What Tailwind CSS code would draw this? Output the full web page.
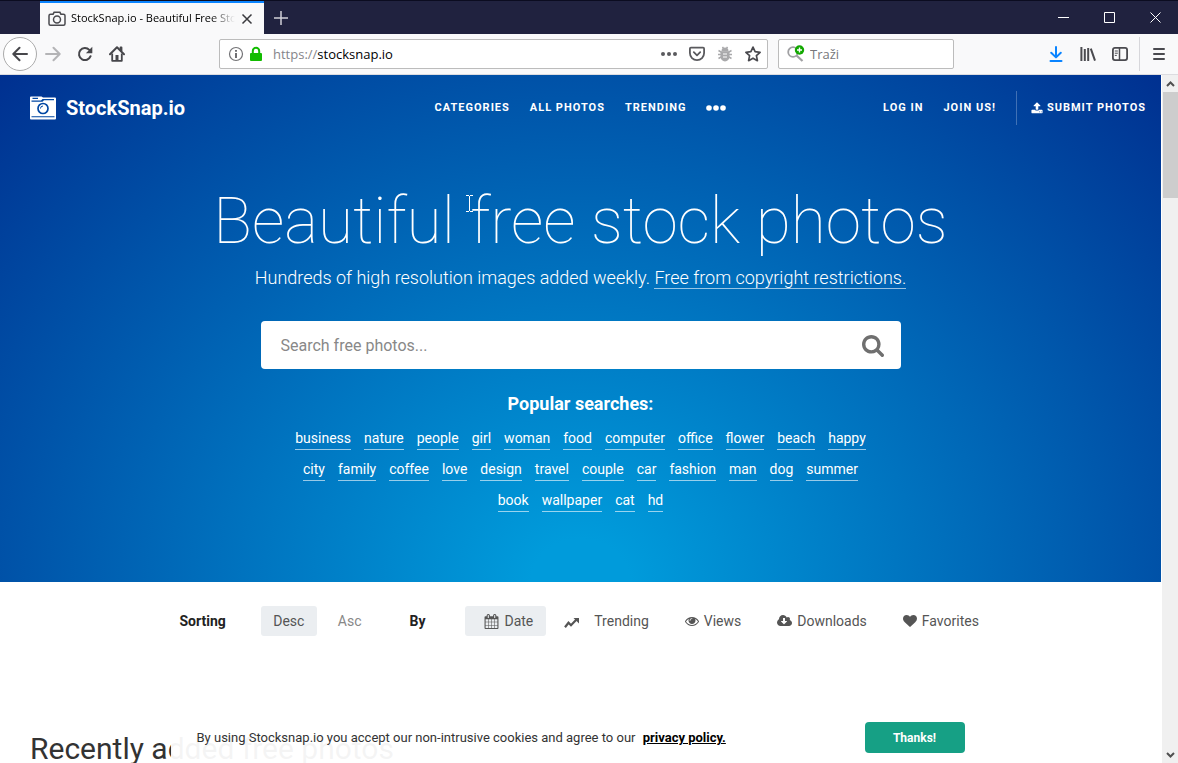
<!DOCTYPE html>
<html lang="en">
<head>
    <meta charset="UTF-8">
    <meta name="viewport" content="width=device-width, initial-scale=1.0">
    <title>StockSnap.io - Beautiful Free Stock Photos</title>
    <script src="https://cdn.jsdelivr.net/npm/@tailwindcss/browser@4"></script>
</head>
<body class="h-screen flex flex-col overflow-hidden bg-white font-['Roboto',sans-serif]">

    <!-- Tab strip -->
    <div class="h-[34px] shrink-0 flex items-stretch bg-[#20223f] border-t border-[#0b0c20] font-['Open_Sans',sans-serif]">
        <div class="ml-10 w-56 flex items-center bg-[#f9f9fa] border-t-2 border-[#0a84ff] pl-2 pr-[11px]">
            <svg class="w-[18px] h-4 shrink-0" viewBox="0 0 18 16" fill="none" stroke="#4a4a4f" stroke-width="1.5"><path d="M2.5 3.2h2.6l1-1.9h5.8l1 1.9h2.6q1.5 0 1.5 1.5v8q0 1.5-1.5 1.5h-13Q1 14.200 1 12.700v-8q0-1.500 1.500-1.500z"/><circle cx="9" cy="8.500" r="3.500"/></svg>
            <div class="ml-[5px] flex-1 overflow-hidden whitespace-nowrap text-[11px] text-black mask-r-from-85%">StockSnap.io - Beautiful Free Stock</div>
            <button class="ml-1.5 shrink-0" aria-label="Close tab">
                <svg class="w-3 h-3" viewBox="0 0 12 12" stroke="#3a3a3e" stroke-width="1.500"><path d="M1.500 1.500l9 9M10.500 1.500l-9 9"/></svg>
            </button>
        </div>
        <button class="ml-[9px]" aria-label="New tab">
            <svg class="w-4 h-4" viewBox="0 0 16 16" stroke="#d0d0d8" stroke-width="1.500"><path d="M8 1v14M1 8h14"/></svg>
        </button>
        <div class="ml-auto flex">
            <button class="w-[46px] flex items-center justify-center" aria-label="Minimize"><svg class="w-[11px] h-[11px]" viewBox="0 0 11 11" stroke="#fff"><path d="M0 5.500h11"/></svg></button>
            <button class="w-[46px] flex items-center justify-center" aria-label="Maximize"><svg class="w-[11px] h-[11px]" viewBox="0 0 11 11" stroke="#fff" fill="none"><path d="M.5.5h10v10H.5z"/></svg></button>
            <button class="w-[46px] flex items-center justify-center" aria-label="Close"><svg class="w-[11px] h-[11px]" viewBox="0 0 11 11" stroke="#fff"><path d="M.5.5l10 10M10.500.5l-10 10"/></svg></button>
        </div>
    </div>

    <!-- Toolbar -->
    <div class="h-[41px] shrink-0 flex items-center bg-[#f9f9fa] border-b border-[#dcdce0] font-['Open_Sans',sans-serif] text-[#4a4a4f]">
        <div class="flex items-center pl-[3px]">
            <button class="w-[34px] h-[34px] rounded-full border border-[#ababab] bg-white flex items-center justify-center" aria-label="Back">
                <svg class="w-4 h-4" viewBox="0 0 16 16" fill="none" stroke="#47474b" stroke-width="2" stroke-linecap="round" stroke-linejoin="round"><path d="M15 8H1.500M7.500 1.800L1.300 8l6.200 6.200"/></svg>
            </button>
            <button class="w-8 flex items-center justify-center" aria-label="Forward">
                <svg class="w-4 h-4" viewBox="0 0 16 16" fill="none" stroke="#b4b4b6" stroke-width="2" stroke-linecap="round" stroke-linejoin="round"><path d="M1 8h13.500M8.500 1.800L14.700 8l-6.200 6.200"/></svg>
            </button>
            <button class="w-8 flex items-center justify-center" aria-label="Reload">
                <svg class="w-4 h-4" viewBox="0 0 16 16"><path d="M13.600 10.200A6 6 0 1 1 12.300 3.900" fill="none" stroke="#47474b" stroke-width="2" stroke-linecap="round"/><path d="M15.300.8v6.100q0 .4-.4.4H8.900z" fill="#47474b"/></svg>
            </button>
            <button class="w-8 flex items-center justify-center" aria-label="Home">
                <svg class="w-4 h-4" viewBox="0 0 16 16"><path d="M1 8.300L8 1.300l7 7" fill="none" stroke="#47474b" stroke-width="2" stroke-linecap="round" stroke-linejoin="round"/><path d="M3.200 7.500v7.300h9.600V7.500M11.500 4V1.500h1V5" fill="none" stroke="#47474b" stroke-width="1.800" stroke-linejoin="round"/><path d="M6.500 9h3v6h-3z" fill="#47474b"/></svg>
            </button>
        </div>
        <div class="ml-[86px] flex-1 max-w-[549px] h-[30px] flex items-center bg-white border border-[#bcbcbc] rounded-[2px] pl-2 pr-1.5">
            <svg class="w-4 h-4 shrink-0" viewBox="0 0 16 16"><circle cx="8" cy="8" r="6.500" fill="none" stroke="#737376" stroke-width="1.200"/><path d="M7.100 7h1.800v5H7.100zM7.100 4h1.800v1.800H7.100z" fill="#606064"/></svg>
            <svg class="ml-1 w-4 h-4 shrink-0" viewBox="0 0 16 16"><path d="M4.800 8V5a3.200 3.200 0 0 1 6.400 0v3" fill="none" stroke="#12bc00" stroke-width="2"/><rect x="2" y="7" width="12" height="8" rx="1" fill="#12bc00"/></svg>
            <div class="ml-[9px] pt-0.5 flex-1 text-[13px] text-[#85858a]">https://<span class="text-black">stocksnap.io</span></div>
            <div class="flex items-center gap-3">
                <svg class="w-4 h-4" viewBox="0 0 16 16" fill="#5a5a5e"><circle cx="2" cy="8" r="2"/><circle cx="8" cy="8" r="2"/><circle cx="14" cy="8" r="2"/></svg>
                <svg class="w-4 h-4" viewBox="0 0 16 16" fill="none" stroke="#5a5a5e" stroke-width="1.800" stroke-linecap="round" stroke-linejoin="round"><path d="M1.900 1.700h12.200q1 0 1 1v4.300a7.100 7.100 0 0 1-14.200 0V2.700q0-1 1-1z"/><path d="M4.800 6.200L8 9.300l3.200-3.100"/></svg>
                <svg class="w-4 h-4" viewBox="0 0 16 16"><g fill="none" stroke="#a9a9ab" stroke-width="1.500"><path d="M1 8.500h14M1.500 4.500L4 6h8l2.500-1.500M1.500 12.500L4 11h8l2.500 1.500M5.500.8l1.500 2.500M10.500.8L9 3.300"/></g><path d="M4.500 5a3.500 3.500 0 0 1 7 0zM3.500 5.500h9v5a4.500 4.900 0 0 1-9 0z" fill="#a9a9ab"/><path d="M6 8h4M6 11h4" stroke="#fff"/></svg>
                <svg class="w-4 h-4" viewBox="0 0 16 16" fill="none" stroke="#4a4a4f" stroke-width="1.700" stroke-linejoin="round"><path d="M8 1.100l2.100 4.600 5 .6-3.700 3.400 1 5L8 12.200l-4.400 2.500 1-5L.9 6.300l5-.6z"/></svg>
            </div>
        </div>
        <div class="ml-2.5 w-44 h-[30px] flex items-center bg-white border border-[#bcbcbc] rounded-[2px] pl-2">
            <svg class="w-[18px] h-[18px] shrink-0" viewBox="0 0 18 18"><circle cx="6" cy="7" r="4.800" fill="none" stroke="#a0a0a3" stroke-width="1.800"/><path d="M9.500 10.500l6 5.500" stroke="#a0a0a3" stroke-width="2.200"/><circle cx="12.500" cy="5" r="4.700" fill="#12a800"/><path d="M12.500 2.500v5M10 5h5" stroke="#fff" stroke-width="1.400"/></svg>
            <input type="text" aria-label="Traži" placeholder="Traži" class="ml-[5px] pt-0.5 min-w-0 flex-1 text-[13px] outline-none placeholder:text-[#77777b]">
        </div>
        <div class="ml-auto self-stretch flex items-center">
            <button class="w-8 flex items-center justify-center" aria-label="Downloads"><svg class="w-4 h-4" viewBox="0 0 16 16" fill="none" stroke="#0a84ff" stroke-width="2" stroke-linecap="round" stroke-linejoin="round"><path d="M8 1v10M3.200 6.700L8 11.400l4.800-4.700M2.500 15h11"/></svg></button>
            <button class="w-8 flex items-center justify-center" aria-label="Library"><svg class="w-4 h-4" viewBox="0 0 16 16" fill="none" stroke="#4a4a4f" stroke-width="2"><path d="M1.400 1v14M4.800 3v12M8.200 2v13M10.800 2.600l4.200 12"/></svg></button>
            <button class="w-8 flex items-center justify-center" aria-label="Sidebars"><svg class="w-4 h-4" viewBox="0 0 16 16" fill="none" stroke="#4a4a4f" stroke-width="1.800"><rect x=".9" y="1.900" width="14.200" height="12.200" rx="2"/><path d="M7.500 2v12" stroke-width="1.500"/><path d="M2.800 5h3M2.800 7.200h3M2.800 9.400h2" stroke-width="1"/></svg></button>
            <span class="ml-[3px] w-px h-[34px] bg-[#d7d7db]"></span>
            <button class="ml-[3px] w-8 mr-[3px] flex items-center justify-center" aria-label="Menu"><svg class="w-3 h-3" viewBox="0 0 12 12" stroke="#4a4a4f" stroke-width="2" stroke-linecap="round"><path d="M1 1h10M1 6h10M1 11h10"/></svg></button>
        </div>
    </div>

    <div class="flex-1 min-h-0 flex">
        <div class="relative flex-1 min-w-0 overflow-hidden">

            <!-- Hero -->
            <section class="bg-[radial-gradient(ellipse_farthest-corner_at_50%_100%,#009bdb_6%,#003090_100%)] text-white text-center pb-[70px]">
                <header class="h-[66px] grid grid-cols-[1fr_auto_1fr] items-center px-[15px] text-[11px] font-bold tracking-[1px]">
                    <a href="#" class="ml-[15px] flex items-center gap-2.5 text-xl tracking-normal">
                        <svg class="w-[26px] h-6" viewBox="0 0 26 24"><path d="M1 .5h10.500l1.500 1h12q1 0 1 1V22.500q0 1-1 1H1q-1 0-1-1v-21q0-1 1-1z" fill="#fff"/><path d="M2.500 1.800h5.500v1.200H2.500zM1.500 4.400h9.500l1.500-1.500H24v1.300H14l-1.500 1.500h-11zM1.500 20.300h23v1h-23z" fill="#0047a3"/><circle cx="13" cy="12.500" r="5" fill="none" stroke="#0047a3" stroke-width="1.700"/><path d="M10.500 12.500a2.500 2.500 0 0 1 2.500-2.500" fill="none" stroke="#0047a3" stroke-width="1"/></svg>
                        StockSnap.io
                    </a>
                    <nav class="flex items-center gap-5">
                        <a href="#">CATEGORIES</a>
                        <a href="#">ALL PHOTOS</a>
                        <a href="#">TRENDING</a>
                        <a href="#" aria-label="More"><svg class="w-5 h-1.5" viewBox="0 0 20 6" fill="#fff"><circle cx="3" cy="3" r="2.800"/><circle cx="10" cy="3" r="2.800"/><circle cx="17" cy="3" r="2.800"/></svg></a>
                    </nav>
                    <div class="flex items-center justify-end gap-5">
                        <a href="#">LOG IN</a>
                        <a href="#">JOIN US!</a>
                        <a href="#" class="h-[34px] flex items-center gap-1 border-l border-white/25 pl-3.5">
                            <svg class="w-3 h-3" viewBox="0 0 1792 1792" fill="#fff"><path d="M1344 1472q0-26-19-45t-45-19-45 19-19 45 19 45 45 19 45-19 19-45zm256 0q0-26-19-45t-45-19-45 19-19 45 19 45 45 19 45-19 19-45zm128-224v320q0 40-28 68t-68 28h-1472q-40 0-68-28t-28-68v-320q0-40 28-68t68-28h427q21 56 70.500 92t110.500 36h256q61 0 110.500-36t70.500-92h427q40 0 68 28t28 68zm-325-648q-17 40-59 40h-256v448q0 26-19 45t-45 19h-256q-26 0-45-19t-19-45v-448h-256q-42 0-59-40-17-39 14-69l448-448q18-19 45-19t45 19l448 448q31 30 14 69z"/></svg>
                            SUBMIT PHOTOS
                        </a>
                    </div>
                </header>

                <h1 class="mt-[41px] text-[64px] leading-[80px] font-thin">Beautiful free stock photos</h1>
                <p class="mt-0.5 text-lg leading-7 font-light">Hundreds of high resolution images added weekly. <a href="#" class="border-b border-white/60">Free from copyright restrictions.</a></p>

                <form class="mt-[29px] mx-auto max-w-[640px] h-12 flex items-center bg-white rounded pl-5 pr-[17px] pt-0.5">
                    <input type="text" aria-label="Search free photos" placeholder="Search free photos..." class="flex-1 min-w-0 text-base text-[#333] outline-none placeholder:text-[#888]">
                    <button type="button" aria-label="Search">
                        <svg class="w-[22px] h-[22px]" viewBox="64 128 1664 1664" fill="#6f6f6f"><path d="M1216 832q0-185-131.500-316.500t-316.500-131.500-316.500 131.500-131.500 316.500 131.500 316.500 316.500 131.500 316.500-131.500 131.500-316.500zm512 832q0 52-38 90t-90 38q-54 0-90-38l-343-342q-179 124-399 124-143 0-273.500-55.500t-225-150-150-225-55.500-273.500 55.500-273.500 150-225 225-150 273.500-55.500 273.500 55.500 225 150 150 225 55.500 273.500q0 220-124 399l343 343q37 37 37 90z"/></svg>
                    </button>
                </form>

                <h2 class="mt-[21px] text-lg leading-7 font-bold">Popular searches:</h2>
                <div class="mt-2 mx-auto max-w-[580px] flex flex-wrap justify-center gap-x-[13px] gap-y-[7px] text-sm leading-[21px]">
                    <a href="#" class="pt-0.5 border-b border-white/60">business</a>
                    <a href="#" class="pt-0.5 border-b border-white/60">nature</a>
                    <a href="#" class="pt-0.5 border-b border-white/60">people</a>
                    <a href="#" class="pt-0.5 border-b border-white/60">girl</a>
                    <a href="#" class="pt-0.5 border-b border-white/60">woman</a>
                    <a href="#" class="pt-0.5 border-b border-white/60">food</a>
                    <a href="#" class="pt-0.5 border-b border-white/60">computer</a>
                    <a href="#" class="pt-0.5 border-b border-white/60">office</a>
                    <a href="#" class="pt-0.5 border-b border-white/60">flower</a>
                    <a href="#" class="pt-0.5 border-b border-white/60">beach</a>
                    <a href="#" class="pt-0.5 border-b border-white/60">happy</a>
                    <a href="#" class="pt-0.5 border-b border-white/60">city</a>
                    <a href="#" class="pt-0.5 border-b border-white/60">family</a>
                    <a href="#" class="pt-0.5 border-b border-white/60">coffee</a>
                    <a href="#" class="pt-0.5 border-b border-white/60">love</a>
                    <a href="#" class="pt-0.5 border-b border-white/60">design</a>
                    <a href="#" class="pt-0.5 border-b border-white/60">travel</a>
                    <a href="#" class="pt-0.5 border-b border-white/60">couple</a>
                    <a href="#" class="pt-0.5 border-b border-white/60">car</a>
                    <a href="#" class="pt-0.5 border-b border-white/60">fashion</a>
                    <a href="#" class="pt-0.5 border-b border-white/60">man</a>
                    <a href="#" class="pt-0.5 border-b border-white/60">dog</a>
                    <a href="#" class="pt-0.5 border-b border-white/60">summer</a>
                    <a href="#" class="pt-0.5 border-b border-white/60">book</a>
                    <a href="#" class="pt-0.5 border-b border-white/60">wallpaper</a>
                    <a href="#" class="pt-0.5 border-b border-white/60">cat</a>
                    <a href="#" class="pt-0.5 border-b border-white/60">hd</a>
                </div>
            </section>

            <!-- Sorting -->
            <div class="mt-6 mx-auto max-w-[802px] flex items-center text-sm text-[#555]">
                <span class="font-bold text-[#222]">Sorting</span>
                <a href="#" class="ml-[35px] w-14 h-[30px] flex items-center justify-center rounded-[3px] bg-[#ebeef1]">Desc</a>
                <a href="#" class="ml-[9px] h-[30px] px-3 flex items-center text-[#888]">Asc</a>
                <span class="ml-9 font-bold text-[#222]">By</span>
                <a href="#" class="ml-10 h-[30px] pl-[19px] pr-[13px] flex items-center gap-[5px] rounded-[3px] bg-[#ebeef1]">
                    <svg class="w-[15px] h-[15px]" viewBox="0 0 1792 1792" fill="#555"><path d="M192 1664h288v-288h-288v288zm352 0h320v-288h-320v288zm-352-352h288v-320h-288v320zm352 0h320v-320h-320v320zm-352-384h288v-288h-288v288zm736 736h320v-288h-320v288zm-384-736h320v-288h-320v288zm768 736h288v-288h-288v288zm-384-352h320v-320h-320v320zm-352-864v-288q0-13-9.500-22.500t-22.500-9.500h-64q-13 0-22.500 9.500t-9.500 22.500v288q0 13 9.500 22.500t22.500 9.500h64q13 0 22.500-9.500t9.500-22.500zm736 864h288v-320h-288v320zm-384-384h320v-288h-320v288zm384 0h288v-288h-288v288zm32-480v-288q0-13-9.500-22.500t-22.500-9.500h-64q-13 0-22.500 9.500t-9.500 22.500v288q0 13 9.500 22.500t22.500 9.500h64q13 0 22.500-9.500t9.500-22.500zm384-64v1280q0 52-38 90t-90 38h-1408q-52 0-90-38t-38-90v-1280q0-52 38-90t90-38h128v-96q0-66 47-113t113-47h64q66 0 113 47t47 113v96h384v-96q0-66 47-113t113-47h64q66 0 113 47t47 113v96h128q52 0 90 38t38 90z"/></svg>
                    Date
                </a>
                <a href="#" class="h-[30px] px-[18px] flex items-center gap-[15px]">
                    <svg class="w-[15px] h-3.5" viewBox="0 0 15 14"><path d="M1 13.200l3.500-4.500 2.500 2.500 5.500-5.700" fill="none" stroke="#555" stroke-width="2.200"/><path d="M9.500 4H15v5.500z" fill="#555"/></svg>
                    Trending
                </a>
                <a href="#" class="h-[30px] px-[18px] flex items-center gap-[5px]">
                    <svg class="w-3.5 h-3.5" viewBox="0 0 1792 1792" fill="#555"><path d="M1664 960q-152-236-381-353 61 104 61 225 0 185-131.500 316.500t-316.500 131.500-316.500-131.500-131.500-316.500q0-121 61-225-229 117-381 353 133 205 333.500 326.500t434.500 121.500 434.500-121.500 333.500-326.500zm-720-384q0-20-14-34t-34-14q-125 0-214.500 89.500t-89.500 214.500q0 20 14 34t34 14 34-14 14-34q0-86 61-147t147-61q20 0 34-14t14-34zm848 384q0 34-20 69-140 230-376.500 368.500t-499.500 138.500-499.500-139-376.500-368q-20-35-20-69t20-69q140-229 376.500-368t499.500-139 499.500 139 376.500 368q20 35 20 69z"/></svg>
                    Views
                </a>
                <a href="#" class="h-[30px] px-[18px] flex items-center gap-[5px]">
                    <svg class="w-[15px] h-3.5" viewBox="0 0 1920 1792" fill="#555"><path d="M1280 928q0-14-9-23t-23-9h-224v-352q0-13-9.500-22.500t-22.500-9.500h-192q-13 0-22.500 9.500t-9.500 22.500v352h-224q-13 0-22.500 9.500t-9.500 22.500q0 14 9 23l352 352q9 9 23 9t23-9l351-351q10-12 10-24zm640 224q0 159-112.500 271.500t-271.500 112.500h-1088q-185 0-316.500-131.500t-131.500-316.500q0-130 70-240t188-165q-2-30-2-43 0-212 150-362t362-150q156 0 285.500 87t188.500 231q71-62 166-62 106 0 181 75t75 181q0 76-41 138 130 31 213.500 135.500t83.500 238.500z"/></svg>
                    Downloads
                </a>
                <a href="#" class="h-[30px] pl-[18px] flex items-center gap-[5px]">
                    <svg class="w-3.5 h-3.5" viewBox="0 0 1792 1792" fill="#555"><path d="M896 1664q-26 0-44-18l-624-602q-10-8-27.500-26t-55.500-65.500-68-97.500-53.500-121-23.500-138q0-220 127-344t351-124q62 0 126.500 21.500t120 58 95.500 68.500 76 68q36-36 76-68t95.500-68.500 120-58 126.500-21.500q224 0 351 124t127 344q0 221-229 450l-623 600q-18 18-44 18z"/></svg>
                    Favorites
                </a>
            </div>

            <h2 class="mt-[93px] ml-[30px] text-[30px] leading-10 text-[#333]">Recently added free photos</h2>

            <!-- Cookie notice -->
            <div class="absolute bottom-0 inset-x-0 mx-auto max-w-[820px] h-[51px] flex items-start bg-white/95 px-[26px] pt-2.5 text-[13px] text-[#333]">
                <p class="leading-8">By using Stocksnap.io you accept our non-intrusive cookies and agree to our <a href="#" class="ml-1 font-bold text-black underline">privacy policy.</a></p>
                <button class="ml-auto w-[100px] h-[31px] rounded bg-[#16a085] text-white text-xs font-bold">Thanks!</button>
            </div>

            <!-- Text cursor over the headline -->
            <svg class="absolute left-[466px] top-[120px] w-[7px] h-[17px]" viewBox="0 0 7 17" fill="none" stroke="#fff"><path d="M0 .5h3M4 .5h3M3.500 1v15M0 16.500h3M4 16.500h3"/></svg>
        </div>

        <!-- Scrollbar -->
        <div class="w-[17px] shrink-0 flex flex-col items-center bg-[#f0f0f0] border-l border-white">
            <div class="h-[17px] flex items-center"><svg class="w-[9px] h-[6px]" viewBox="0 0 9 6" fill="none" stroke="#505050" stroke-width="2"><path d="M1 5l3.500-3.500L8 5"/></svg></div>
            <div class="w-[15px] h-[106px] bg-[#cdcdcd]"></div>
            <div class="mt-auto h-[17px] flex items-center"><svg class="w-[9px] h-[6px]" viewBox="0 0 9 6" fill="none" stroke="#505050" stroke-width="2"><path d="M1 1l3.500 3.500L8 1"/></svg></div>
        </div>
    </div>
</body>
</html>
